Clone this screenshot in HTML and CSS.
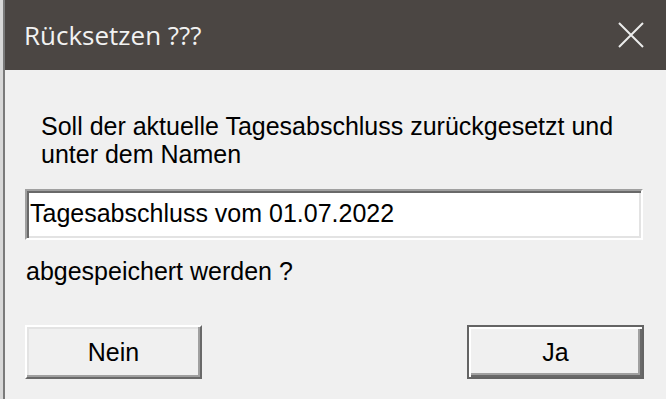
FILE: index.html
```html
<!DOCTYPE html>
<html lang="de">
<head>
<meta charset="utf-8">
<title>Rücksetzen ???</title>
<link rel="stylesheet" href="styles.css">
</head>
<body>
<div class="frame">
  <div class="window">
    <div class="titlebar">
      <span class="title">Rücksetzen ???</span>
      <svg class="close" viewBox="0 0 26 26" aria-label="Schließen">
        <path d="M1 1 L25 25 M25 1 L1 25" />
      </svg>
    </div>
    <div class="content">
      <p class="msg">Soll der aktuelle Tagesabschluss zurückgesetzt und unter dem Namen</p>
      <div class="field">Tagesabschluss vom 01.07.2022</div>
      <p class="msg2">abgespeichert werden ?</p>
      <div class="buttons">
        <button class="btn">Nein</button>
        <button class="btn btn-default">Ja</button>
      </div>
    </div>
  </div>
</div>
</body>
</html>
```
FILE: styles.css
```css
* { box-sizing: border-box; }
html, body { margin: 0; padding: 0; }
body {
  width: 666px;
  height: 399px;
  overflow: hidden;
  background: #f0f0f0;
  font-family: "Liberation Sans", Arial, sans-serif;
  color: #000;
}
.frame {
  height: 399px;
  border-left: 3px solid #d8d8d8;
}
.window {
  height: 100%;
  border-left: 2px solid #7a7a7a;
  display: flex;
  flex-direction: column;
}
.titlebar {
  height: 70px;
  flex: none;
  background: #4b4643;
  display: flex;
  align-items: center;
  justify-content: space-between;
  padding: 0 22px 0 19px;
}
.title {
  font-family: "Open Sans", "Noto Sans", sans-serif;
  font-size: 26px;
  line-height: 36px;
  color: #f2f2f2;
}
.close {
  width: 26px;
  height: 26px;
  fill: none;
  stroke: #ececec;
  stroke-width: 2;
}
.content {
  flex: 1;
  padding: 42px 23px 0 20px;
  display: flex;
  flex-direction: column;
}
.msg {
  margin: 0 0 0 16px;
  font-size: 25px;
  line-height: 28px;
}
.field {
  margin-top: 21px;
  height: 51px;
  background: #fff;
  border: 2px solid;
  border-color: #a0a0a0 #fff #fff #a0a0a0;
  box-shadow: inset 2px 2px 0 #696969, inset -2px -2px 0 #e3e3e3;
  padding: 8px 0 0 3px;
  font-size: 25px;
  line-height: 28px;
  white-space: nowrap;
}
.msg2 {
  margin: 17px 0 0 1px;
  font-size: 25px;
  line-height: 28px;
}
.buttons {
  margin-top: 40px;
  margin-right: -1px;
  display: flex;
  justify-content: space-between;
}
.btn {
  width: 177px;
  height: 54px;
  padding: 0;
  font-family: "Liberation Sans", Arial, sans-serif;
  font-size: 25px;
  color: #000;
  background: #f0f0f0;
  border: 2px solid;
  border-color: #fff #696969 #696969 #fff;
  box-shadow: inset -2px -2px 0 #a0a0a0, inset 2px 2px 0 #e3e3e3;
}
.btn-default {
  border: 2px solid #646464;
  box-shadow: inset 2px 2px 0 #fff, inset -2px -2px 0 #696969, inset -4px -4px 0 #a0a0a0;
}
```
